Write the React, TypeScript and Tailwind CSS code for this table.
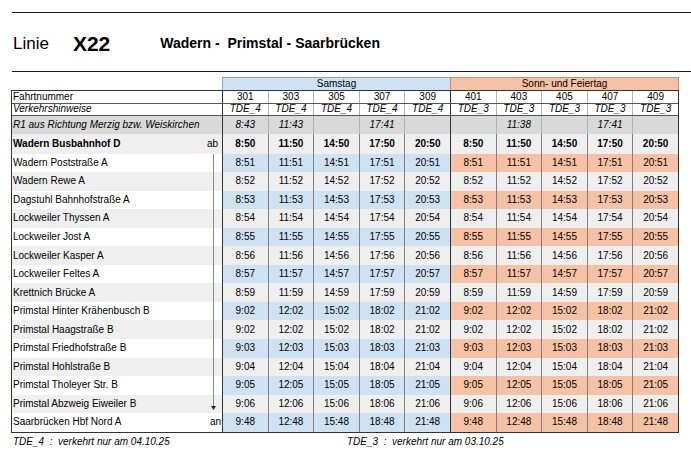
const hours = [8, 11, 14, 17, 20];

function fmt(total: number) {
  const h = Math.floor(total / 60);
  const m = total % 60;
  return `${h}:${m < 10 ? "0" + m : m}`;
}

function times(offset: number) {
  const list = hours.map((h) => fmt(h * 60 + 50 + offset));
  return [...list, ...list];
}

const stations: [string, number][] = [
  ["Wadern Poststraße A", 1],
  ["Wadern Rewe A", 2],
  ["Dagstuhl Bahnhofstraße A", 3],
  ["Lockweiler Thyssen A", 4],
  ["Lockweiler Jost A", 5],
  ["Lockweiler Kasper A", 6],
  ["Lockweiler Feltes A", 7],
  ["Krettnich Brücke A", 9],
  ["Primstal Hinter Krähenbusch B", 12],
  ["Primstal Haagstraße B", 12],
  ["Primstal Friedhofstraße B", 13],
  ["Primstal Hohlstraße B", 14],
  ["Primstal Tholeyer Str. B", 15],
  ["Primstal Abzweig Eiweiler B", 16],
  ["Saarbrücken Hbf Nord A", 58],
];

const numbers = ["301", "303", "305", "307", "309", "401", "403", "405", "407", "409"];
const hints = ["TDE_4", "TDE_4", "TDE_4", "TDE_4", "TDE_4", "TDE_3", "TDE_3", "TDE_3", "TDE_3", "TDE_3"];
const r1 = ["8:43", "11:43", "", "17:41", "", "", "11:38", "", "17:41", ""];

function sep(i: number, light: boolean) {
  if (i === 0 || i === 5) return "border-l border-[#333]";
  return light ? "border-l border-[#b3b3b3]" : "border-l border-[#808080]";
}

export default function App() {
  return (
    <div className="w-[691px] h-[460px] bg-white text-black font-['Liberation_Sans',Arial,sans-serif] overflow-hidden">
      <div className="pt-[12px]">
        <div className="ml-[12px] border-t-[1.5px] border-[#1a1a1a]" />
        <div className="h-[58px] pt-[3px] pl-[13px] flex items-center">
          <span className="text-[17px]">Linie</span>
          <span className="ml-[24px] text-[21px] font-bold">X22</span>
          <span className="ml-[50px] text-[14px] font-bold whitespace-pre">Wadern -  Primstal - Saarbrücken</span>
        </div>
        <div className="ml-[12px] border-t-[1.5px] border-[#1a1a1a]" />
      </div>

      <div className="ml-[11px] w-[668px] mt-[5px] text-[10px] leading-none">
        {/* day header */}
        <div className="flex h-[13px]">
          <div className="w-[211px]" />
          <div className="flex-1 bg-[#cfe2f3] border-l border-t border-[#8aa6bf] flex items-center justify-center">Samstag</div>
          <div className="flex-1 bg-[#f6c2a3] border-l border-t border-r border-[#c98f6f] flex items-center justify-center">Sonn- und Feiertag</div>
        </div>

        <div className="border border-[#333]">
          <div className="flex h-[12.5px] border-b border-[#555]">
            <div className="w-[210px] pl-[1px] flex items-center">Fahrtnummer</div>
            {numbers.map((n, i) => (
              <div key={n} className={`flex-1 flex items-center justify-center ${sep(i, true)}`}>{n}</div>
            ))}
          </div>
          <div className="flex h-[12px] border-b border-[#555] italic">
            <div className="w-[210px] pl-[1px] flex items-center">Verkehrshinweise</div>
            {hints.map((n, i) => (
              <div key={i} className={`flex-1 flex items-center justify-center ${sep(i, true)}`}>{n}</div>
            ))}
          </div>
          <div className="flex h-[18px] bg-[#d9d9d9] italic">
            <div className="w-[210px] pl-[1px] flex items-center">R1 aus Richtung Merzig bzw. Weiskirchen</div>
            {r1.map((n, i) => (
              <div key={i} className={`flex-1 flex items-center justify-center ${sep(i, true)}`}>{n}</div>
            ))}
          </div>
          <div className="flex h-[20px] bg-[#efefef] font-bold">
            <div className="w-[210px] pl-[1px] pr-[4px] flex items-center justify-between">
              <span>Wadern Busbahnhof D</span>
              <span className="font-normal">ab</span>
            </div>
            {times(0).map((n, i) => (
              <div key={i} className={`flex-1 flex items-center justify-center ${sep(i, false)}`}>{n}</div>
            ))}
          </div>

          {stations.map(([name, off], r) => {
            const hi = r % 2 === 0;
            const last = r === stations.length - 1;
            return (
              <div key={name} className={`flex h-[18.55px] ${hi ? "bg-white" : "bg-[#efefef]"}`}>
                <div className="w-[210px] flex">
                  <div className="flex-1 pl-[1px] flex items-center">{name}</div>
                  {last ? (
                    <div className="w-[9px] flex items-center justify-end pr-[1px]">an</div>
                  ) : (
                    <div className="w-[9px] flex flex-col">
                      <div className="w-px flex-1 bg-[#8a8a8a]" />
                      {r === stations.length - 2 && (
                        <>
                          <svg width="5" height="4" viewBox="0 0 5 4" className="-ml-[2px]">
                            <path d="M0 0 L5 0 L2.5 4 Z" fill="#222" />
                          </svg>
                          <div className="h-[3px]" />
                        </>
                      )}
                    </div>
                  )}
                </div>
                {times(off).map((n, i) => (
                  <div
                    key={i}
                    className={`flex-1 flex items-center justify-center ${sep(i, false)} ${
                      hi ? (i < 5 ? "bg-[#cfe2f3]" : "bg-[#f6c2a3]") : ""
                    }`}
                  >
                    {n}
                  </div>
                ))}
              </div>
            );
          })}
        </div>

        <div className="flex mt-[4px] italic text-[10px] whitespace-pre">
          <div className="w-[336px] pl-[2px]">TDE_4  :  verkehrt nur am 04.10.25</div>
          <div>TDE_3  :  verkehrt nur am 03.10.25</div>
        </div>
      </div>
    </div>
  );
}
